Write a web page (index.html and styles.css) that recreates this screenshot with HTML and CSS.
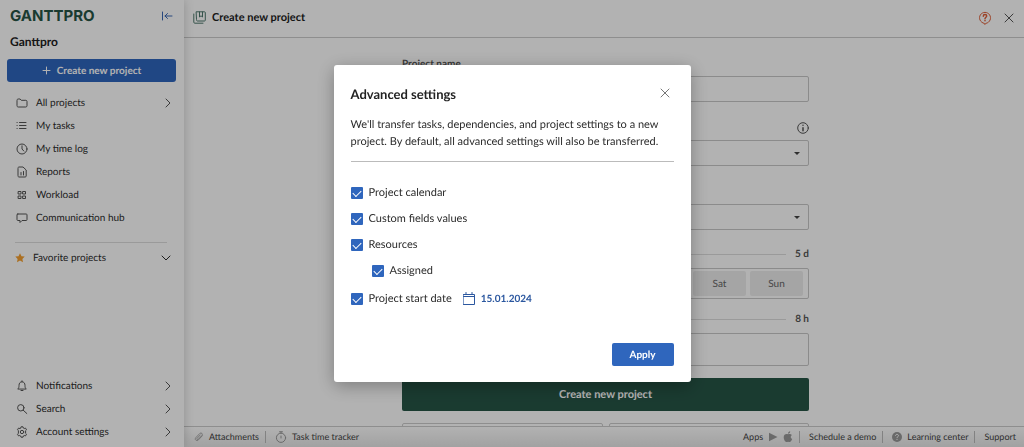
FILE: index.html
```html
<!DOCTYPE html>
<html lang="en">
<head>
<meta charset="utf-8">
<meta name="viewport" content="width=device-width, initial-scale=1">
<title>Create new project</title>
<link rel="stylesheet" href="styles.css">
</head>
<body>
<div class="app">
  <aside class="sidebar">
    <div class="brand">
      <span class="logo">GANTTPRO</span>
      <button class="icon-button collapse" type="button" aria-label="Collapse sidebar">
        <svg class="icon" width="12" height="12" viewBox="0 0 12 12"><path d="M1.5 2v8M11 6H4M6.500 3.500 4 6l2.500 2.500"/></svg>
      </button>
    </div>
    <p class="team">Ganttpro</p>
    <button class="new-project" type="button">
      <svg class="icon" width="9" height="9" viewBox="0 0 9 9"><path d="M4.500 1v7M1 4.500h7"/></svg>
      Create new project
    </button>
    <nav class="nav">
      <a class="nav-link" href="#"><svg class="icon" width="12" height="12" viewBox="0 0 12 12"><path d="M1 3.300C1 2.500 1.500 2 2.200 2h1.900l1.200 1.300h4.500c.7 0 1.200.5 1.200 1.200v4.300c0 .7-.5 1.200-1.200 1.200H2.200C1.500 10 1 9.500 1 8.800z"/></svg><span class="nav-text">All projects</span><svg class="icon chevron" width="8" height="10" viewBox="0 0 8 10"><path d="m2 1 4 4-4 4"/></svg></a>
      <a class="nav-link" href="#"><svg class="icon" width="12" height="12" viewBox="0 0 12 12"><path d="M3.500 2.500H10M3.500 5.500H10M3.500 8.500H10M1 2.500h.2M1 5.500h.2M1 8.500h.2"/></svg><span class="nav-text">My tasks</span></a>
      <a class="nav-link" href="#"><svg class="icon" width="12" height="12" viewBox="0 0 12 12"><circle cx="6" cy="6" r="5"/><path d="M6 2.800V6l1.800 2"/></svg><span class="nav-text">My time log</span></a>
      <a class="nav-link" href="#"><svg class="icon" width="12" height="12" viewBox="0 0 12 12"><path d="M2 2c0-.6.4-1 1-1h4l3.200 3v6c0 .6-.4 1-1 1H3c-.6 0-1-.4-1-1zM5 6.500V9M7.500 5.500V9"/></svg><span class="nav-text">Reports</span></a>
      <a class="nav-link" href="#"><svg class="icon" width="12" height="12" viewBox="0 0 12 12"><path d="M2.500 2.500H5V5H2.500zM7 2.500h2.500V5H7zM2.500 7H5v2.500H2.500zM7 7h2.500v2.500H7z"/></svg><span class="nav-text">Workload</span></a>
      <a class="nav-link" href="#"><svg class="icon" width="12" height="12" viewBox="0 0 12 12"><path d="M1.800 2h8.400c.5 0 .8.3.8.8v4.900c0 .5-.3.800-.8.800H6L4 10.500v-2H1.800c-.5 0-.8-.3-.8-.8V2.800c0-.5.3-.8.8-.8z"/></svg><span class="nav-text">Communication hub</span></a>
    </nav>
    <button class="favorites" type="button">
      <svg width="10" height="10" viewBox="0 0 10 10"><path class="star" d="m5 .2 1.500 3 3.200.4-2.300 2.300.6 3.300L5 7.600 2 9.200l.6-3.300L.3 3.600l3.200-.4z"/></svg>
      <span class="nav-text">Favorite projects</span>
      <svg class="icon chevron" width="10" height="8" viewBox="0 0 10 8"><path d="m1 2 4 4 4-4"/></svg>
    </button>
    <nav class="nav nav-bottom">
      <a class="nav-link" href="#"><svg class="icon" width="12" height="12" viewBox="0 0 12 12"><path d="M2 8.800c.8-.8 1-1.500 1-3.300C3 3.200 4.200 1.800 6 1.800s3 1.400 3 3.700c0 1.800.2 2.500 1 3.300zM5 10.500h2M6 .8v1"/></svg><span class="nav-text">Notifications</span><svg class="icon chevron" width="8" height="10" viewBox="0 0 8 10"><path d="m2 1 4 4-4 4"/></svg></a>
      <a class="nav-link" href="#"><svg class="icon" width="12" height="12" viewBox="0 0 12 12"><circle cx="4.800" cy="4.800" r="3.200"/><path d="m7.200 7.200 3.600 3.300"/></svg><span class="nav-text">Search</span><svg class="icon chevron" width="8" height="10" viewBox="0 0 8 10"><path d="m2 1 4 4-4 4"/></svg></a>
      <a class="nav-link" href="#"><svg class="icon" width="12" height="12" viewBox="0 0 12 12"><path d="M4.700 2 5 .8h2L7.300 2l.9.500 1.300-.4 1 1.700-.9.900v2.600l.9.900-1 1.700-1.300-.4-.9.500L7 11.200H5L4.700 10l-.9-.5-1.300.4-1-1.700.9-.9V4.700l-.9-.9 1-1.700 1.300.4z"/><circle cx="6" cy="6" r="1.700"/></svg><span class="nav-text">Account settings</span><svg class="icon chevron" width="8" height="10" viewBox="0 0 8 10"><path d="m2 1 4 4-4 4"/></svg></a>
    </nav>
  </aside>

  <div class="workspace">
    <header class="topbar">
      <svg class="icon green" width="13" height="13" viewBox="0 0 13 13"><path d="M3.500.800h8c.5 0 .8.300.8.800v7.600c0 .5-.3.800-.8.800h-7c-.6 0-1-.4-1-1zM6.500 1v5l1.500-1.200L9.500 6V1M.8 3v8.200c0 .6.4 1 1 1H10"/></svg>
      <h1 class="topbar-title">Create new project</h1>
      <button class="icon-button help" type="button" aria-label="Help">
        <svg class="icon" width="14" height="14" viewBox="0 0 14 14"><path d="M6 12.300A5.500 5.500 0 1 1 8 12.300l-1 1z"/><path class="bold" d="M5.300 5.300C5.300 4.200 6 3.600 7 3.600s1.700.6 1.700 1.500C8.700 6.200 7 6.300 7 7.800M7 9.600v.1"/></svg>
      </button>
      <button class="icon-button" type="button" aria-label="Close">
        <svg class="icon" width="10" height="10" viewBox="0 0 10 10"><path d="m1 1 8 8M9 1 1 9"/></svg>
      </button>
    </header>

    <main class="content">
      <form class="form">
        <div class="field">
          <div class="field-head"><label for="name">Project name</label></div>
          <input class="control" id="name" type="text">
        </div>
        <div class="field">
          <div class="field-head end">
            <svg class="icon" width="12" height="12" viewBox="0 0 12 12"><circle cx="6" cy="6" r="5.300"/><path class="bold" d="M6 3.200v.1M6 5.700v3"/></svg>
          </div>
          <div class="select"><select class="control" aria-label="Template"></select></div>
        </div>
        <div class="field">
          <div class="field-head"></div>
          <div class="select"><select class="control" aria-label="Calendar"></select></div>
        </div>
        <div class="field split">
          <div class="field-head"><span class="rule"></span><span>5 d</span></div>
          <div class="days">
            <button class="day" type="button">Sat</button>
            <button class="day" type="button">Sun</button>
          </div>
        </div>
        <div class="field split">
          <div class="field-head"><span class="rule"></span><span>8 h</span></div>
          <input class="control tall" type="text" aria-label="Working hours">
        </div>
        <button class="submit" type="button">Create new project</button>
        <div class="cards"><div class="card"></div><div class="card"></div></div>
      </form>
    </main>

    <footer class="statusbar">
      <a class="status-link" href="#"><svg class="icon faint" width="10" height="10" viewBox="0 0 12 12"><path d="m10 4.500-4.700 5C3.500 11.400.3 9.500 2 7L7 1.700c1.700-1.500 4 .5 2.600 2.300L5 8.800C3.800 9.800 2.800 8.500 3.700 7.600L7.500 3.500"/></svg>Attachments</a>
      <a class="status-link ruled" href="#"><svg class="icon faint" width="12" height="12" viewBox="0 0 12 12"><circle cx="6" cy="6.800" r="4.600"/><path d="M4.500.800h3M6 .8v1.400M6 5v2"/></svg>Task time tracker</a>
      <span class="status-link push">Apps
        <svg class="faint" width="10" height="10" viewBox="0 0 10 10"><path class="solid" d="m1 .8 8.500 4.200L1 9.200z"/></svg>
        <svg class="faint" width="10" height="12" viewBox="0 0 10 12"><path class="solid" d="M5 3.300C3.500 2.500.7 2.900.7 6.200c0 2.300 1.500 4.800 2.800 4.800.6 0 .9-.3 1.600-.3s1 .3 1.600.3c1 0 2-1.500 2.500-2.900-1.800-.8-2-3.300-.3-4.200C7.900 2.700 6.300 2.800 5 3.300zM5 2.700C5 1.300 6 .4 7.200.3 7.300 1.600 6.300 2.700 5 2.700z"/></svg>
      </span>
      <a class="status-link ruled" href="#">Schedule a demo</a>
      <a class="status-link ruled" href="#"><svg class="faint" width="10" height="10" viewBox="0 0 10 10"><circle class="solid" cx="5" cy="5" r="5"/><path class="mark" d="M3.500 3.900C3.500 3 4.100 2.400 5 2.400s1.500.5 1.500 1.300C6.500 4.700 5 4.700 5 5.900M5 6.900v1"/></svg>Learning center</a>
      <a class="status-link ruled" href="#">Support</a>
    </footer>
  </div>
</div>

<div class="overlay">
  <section class="modal" role="dialog" aria-modal="true" aria-labelledby="modal-title">
    <header class="modal-head">
      <h2 class="modal-title" id="modal-title">Advanced settings</h2>
      <button class="icon-button modal-close" type="button" aria-label="Close">
        <svg class="icon" width="10" height="10" viewBox="0 0 10 10"><path d="m1 1 8 8M9 1 1 9"/></svg>
      </button>
    </header>
    <p class="modal-text">We'll transfer tasks, dependencies, and project settings to a new project. By default, all advanced settings will also be transferred.</p>
    <div class="options">
      <label class="option"><input class="check" type="checkbox" checked>Project calendar</label>
      <label class="option"><input class="check" type="checkbox" checked>Custom fields values</label>
      <label class="option"><input class="check" type="checkbox" checked>Resources</label>
      <label class="option nested"><input class="check" type="checkbox" checked>Assigned</label>
      <div class="date-row">
        <label class="option"><input class="check" type="checkbox" checked>Project start date</label>
        <button class="date" type="button">
          <svg class="icon" width="12" height="14" viewBox="0 0 12 14"><path d="M.5 2.500h11v10H.5zM.5 4.500h11M3 .5v2M9 .5v2"/></svg>15.01.2024
        </button>
      </div>
    </div>
    <button class="apply" type="button">Apply</button>
  </section>
</div>
</body>
</html>
```

FILE: styles.css
```css
* { box-sizing: border-box; }

body {
  margin: 0;
  font-family: Lato, "Liberation Sans", sans-serif;
  font-size: 10px;
  line-height: 16px;
  color: #2b2b2b;
  background: #fff;
  text-rendering: geometricPrecision;
}

button, input, select { font: inherit; color: inherit; text-rendering: inherit; }
button { padding: 0; border: 0; background: none; cursor: pointer; }
a { color: inherit; text-decoration: none; }
svg { display: block; flex: none; }

.icon {
  fill: none;
  stroke: currentColor;
  stroke-linecap: round;
  stroke-linejoin: round;
}
.bold { stroke-width: 1.5; }
.solid { fill: currentColor; }
.mark { fill: none; stroke: #fff; }
.star { fill: #f5a030; }
.green { color: #4d786c; }
.faint { color: #999; }
.icon-button { display: flex; color: #555; }

.app { display: flex; height: 100vh; overflow: hidden; }

/* Sidebar */
.sidebar {
  position: relative;
  display: flex;
  flex-direction: column;
  flex: none;
  width: 184px;
  padding: 8px 8px 4px 7px;
  background: #fff;
  box-shadow: 0 0 10px rgba(0, 0, 0, .2);
}
.brand { display: flex; align-items: center; justify-content: space-between; padding: 0 3px; }
.logo { font-family: Inter, sans-serif; font-size: 15px; font-weight: 700; color: #265546; }
.collapse { color: #3a68b5; }
.team { margin: 10px 3px 9px; font-weight: 700; font-size: 12px; color: #222; }
.new-project {
  display: flex;
  align-items: center;
  justify-content: center;
  gap: 6px;
  height: 23px;
  border-radius: 3px;
  background: #2f66bd;
  color: #fff;
  font-weight: 700;
}
.nav { display: flex; flex-direction: column; margin-top: 9px; }
.nav-link { display: flex; align-items: center; gap: 8px; height: 23px; padding: 0 4px 0 9px; }
.nav-link .icon { color: #555; }
.nav-text { flex: 1; text-align: left; }
.favorites {
  display: flex;
  align-items: center;
  gap: 8px;
  margin: 13px 9px 0 8px;
  padding-top: 7px;
  border-top: 1px solid #ddd;
}
.favorites .chevron { margin-right: -4px; }
.nav-bottom { margin-top: auto; }

/* Main area */
.workspace { display: flex; flex: 1; flex-direction: column; min-width: 0; }
.topbar {
  display: flex;
  align-items: center;
  gap: 6px;
  flex: none;
  height: 38px;
  padding: 0 10px 2px 9px;
  border-bottom: 1px solid #ccc;
}
.topbar-title { margin: 0; font-size: 11px; line-height: 16px; font-weight: 700; color: #222; }
.help { margin: 0 6px 0 auto; color: #e0603a; }

.content { flex: 1; min-height: 0; padding: 18px 0 0 3px; overflow: hidden; }
.form { display: flex; flex-direction: column; width: 407px; margin: 0 auto; }
.field { display: flex; flex-direction: column; gap: 4px; margin-bottom: 18px; }
.field-head { display: flex; align-items: center; height: 16px; gap: 9px; color: #555; font-weight: 700; }
.end { justify-content: flex-end; }
.rule { flex: 1; height: 1px; background: #ddd; }
.control {
  display: block;
  width: 100%;
  height: 26px;
  padding: 0 8px;
  border: 1px solid #c8c8c8;
  border-radius: 2px;
  background: #fff;
  appearance: none;
}
.tall { height: 33px; }
.select { position: relative; }
.select::after {
  content: "";
  position: absolute;
  top: 12px;
  right: 9px;
  border: 3px solid transparent;
  border-top-color: #444;
  border-bottom: 0;
}
.split { gap: 6px; margin: -2px 0 14px; }
.days { display: flex; justify-content: flex-end; gap: 4px; height: 31px; padding: 2px 5px; border: 1px solid #c8c8c8; border-radius: 2px; }
.day { width: 53px; border-radius: 2px; background: #ececec; color: #666; }
.submit {
  height: 33px;
  margin: -2px 0 12px;
  border-radius: 2px;
  background: #265546;
  color: #fff;
  font-size: 11px;
  font-weight: 700;
}
.cards { display: flex; gap: 6px; }
.card { flex: 1; height: 40px; border: 1px solid #ccc; border-radius: 2px; }

.statusbar {
  display: flex;
  align-items: center;
  flex: none;
  height: 21px;
  padding: 0 8px 0 10px;
  border-top: 1px solid #ccc;
  background: linear-gradient(#fff, #e8e8e8);
  font-size: 9px;
  color: #444;
}
.status-link { display: flex; align-items: center; gap: 5px; height: 12px; }
.ruled { margin-left: 6px; padding-left: 9px; border-left: 1px solid #bbb; }
.push { margin-left: auto; }

/* Modal */
.overlay {
  position: fixed;
  inset: 0;
  display: flex;
  align-items: center;
  justify-content: center;
  background: rgba(0, 0, 0, .3);
}
.modal {
  display: flex;
  flex-direction: column;
  width: 357px;
  padding: 19px 17px 16px;
  border-radius: 3px;
  background: #fff;
  box-shadow: 0 4px 18px rgba(0, 0, 0, .3);
  font-size: 11px;
}
.modal-head { display: flex; justify-content: space-between; height: 20px; }
.modal-title { margin: 0; font-size: 13px; line-height: 20px; font-weight: 700; color: #222; }
.modal-close { padding: 4px; color: #777; }
.modal-text { margin: 12px 0 0; padding-bottom: 11px; border-bottom: 1px solid #bbb; line-height: 17px; }
.options { display: flex; flex-direction: column; padding-top: 18px; }
.option { display: flex; align-items: center; gap: 6px; height: 26px; }
.nested { margin-left: 21px; }
.date-row { display: flex; align-items: center; gap: 11px; margin-top: 2px; }
.check {
  display: grid;
  place-items: center;
  width: 12px;
  height: 12px;
  margin: 0;
  border-radius: 1px;
  background: #2f66bd;
  appearance: none;
}
.check:checked::before {
  content: "";
  width: 7px;
  height: 4px;
  margin-bottom: 2px;
  border: solid #fff;
  border-width: 0 0 1px 1px;
  transform: rotate(-45deg);
}
.date { display: flex; align-items: center; gap: 6px; color: #2b579f; font-size: 10px; font-weight: 700; }
.apply {
  align-self: flex-end;
  width: 62px;
  height: 23px;
  margin-top: 31px;
  border-radius: 2px;
  background: #2f66bd;
  color: #fff;
  font-size: 10px;
  font-weight: 700;
}
```
